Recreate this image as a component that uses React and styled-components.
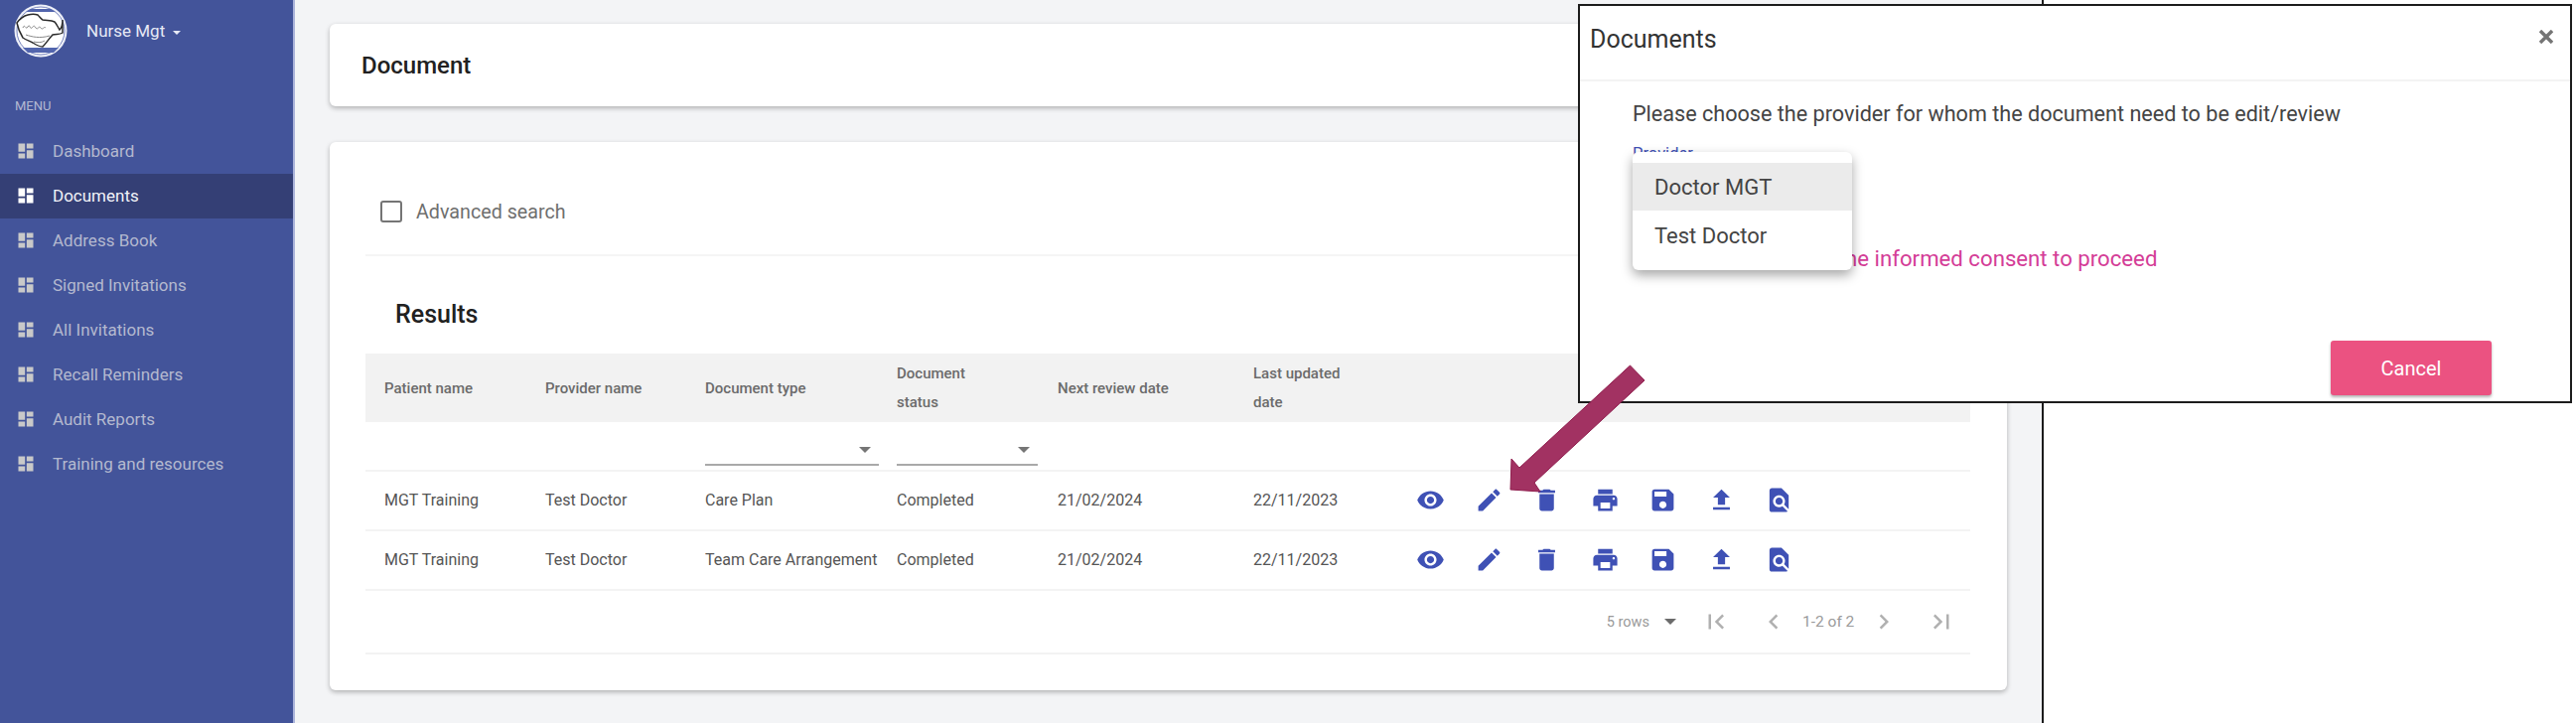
import styled, { createGlobalStyle } from "styled-components"

const GlobalStyle = createGlobalStyle`
   html, body {
      margin: 0;
      padding: 0;
      background: #fff;
      font-family: Roboto, "Liberation Sans", sans-serif;
   }
   * {
      box-sizing: border-box;
   }
`

const Page = styled.div`
   position: relative;
   display: flex;
   width: 2594px;
   height: 728px;
   overflow: hidden;
`

const Sidebar = styled.aside`
   width: 297px;
   flex-shrink: 0;
   background: #43549a;
   border-right: 2px solid #aab3da;
`

const Brand = styled.div`
   display: flex;
   align-items: center;
   height: 54px;
   margin: 4px 0 0 14px;
   column-gap: 19px;
   color: #e6e9f5;
   font-size: 17px;
`

const Caret = styled.span`
   display: inline-block;
   margin-left: ${(p) => p.$gap ?? 8}px;
   vertical-align: middle;
   border-left: ${(p) => p.$size || 4}px solid transparent;
   border-right: ${(p) => p.$size || 4}px solid transparent;
   border-top: ${(p) => p.$size || 4}px solid ${(p) => p.$color || "#e6e9f5"};
`

const MenuLabel = styled.div`
   margin: 41px 0 15px 15px;
   line-height: 16px;
   font-size: 13px;
   color: #b3b9d2;
`

const NavItem = styled.div`
   display: flex;
   align-items: center;
   height: 45px;
   padding: 0 0 2px 16px;
   column-gap: 17px;
   font-size: 17px;
   background: ${(p) => (p.$active ? "#343f75" : "transparent")};
   color: ${(p) => (p.$active ? "#f2f3f8" : "#b4b9cf")};

   svg {
      fill: ${(p) => (p.$active ? "#ffffff" : "#c9c9c9")};
   }
`

const Main = styled.main`
   width: 1761px;
   flex-shrink: 0;
   display: flex;
   flex-direction: column;
   row-gap: 36px;
   padding: 24px 35px 0 35px;
   background: #f3f4f6;
   border-right: 2px solid #1c1c1c;
`

const Card = styled.section`
   background: #fff;
   border-radius: 6px;
   box-shadow: 0 2px 5px rgba(0, 0, 0, 0.28);
`

const TitleCard = styled(Card)`
   display: flex;
   align-items: center;
   height: 83px;
   padding-left: 32px;
   font-size: 24px;
   font-weight: 500;
   color: #212121;
`

const ResultsCard = styled(Card)`
   height: 552px;
   padding: 0 37px 0 36px;
`

const SearchRow = styled.div`
   display: flex;
   align-items: center;
   height: 115px;
   padding: 27px 0 0 15px;
   column-gap: 14px;
   border-bottom: 2px solid #f5f5f5;
   color: #6f6f6f;
   font-size: 19.7px;
`

const CheckBox = styled.span`
   width: 22px;
   height: 22px;
   border: 2px solid #757575;
   border-radius: 3px;
`

const ResultsTitle = styled.h2`
   display: flex;
   align-items: center;
   height: 98px;
   margin: 0;
   padding: 18px 0 0 30px;
   font-size: 25px;
   font-weight: 500;
   color: #212121;
`

const Row = styled.div`
   display: grid;
   grid-template-columns: 162px 161px 193px 162px 197px 164px 1fr;
   align-items: center;
   height: ${(p) => p.$height}px;
   padding: 0 0 ${(p) => p.$lift || 0}px 19px;
   color: #555;
   font-size: 16px;
   border-bottom: 2px solid #f3f3f3;
`

const HeadRow = styled(Row)`
   padding-top: 1px;
   background: #f2f2f2;
   border-bottom: 0;
   color: #6b6b6b;
   font-size: 15px;
   font-weight: 500;
   line-height: 29px;
`

const FilterSelect = styled.div`
   display: flex;
   align-items: center;
   justify-content: flex-end;
   width: ${(p) => p.$width}px;
   height: 30px;
   margin-top: 10px;
   padding-right: 8px;
   border-bottom: 2px solid #a9a9a9;
`

const Actions = styled.div`
   display: flex;
   column-gap: 29.5px;

   svg {
      display: block;
      fill: #3f51b5;
   }
`

const Pagination = styled.div`
   display: flex;
   align-items: center;
   justify-content: flex-end;
   height: 64px;
   border-bottom: 2px solid #f3f3f3;
   color: #9a9a9a;
   font-size: 15.5px;
`

const PageButton = styled.span`
   display: flex;
   justify-content: center;
   width: 58px;

   svg {
      fill: #b0b0b0;
   }
`

const PageRange = styled.span`
   width: 53px;
   white-space: nowrap;
`

const RowsPick = styled.span`
   display: flex;
   align-items: center;
   margin-right: 11px;
   font-size: 14.5px;
`

const Modal = styled.div`
   position: absolute;
   left: 1589px;
   top: 4px;
   display: flex;
   flex-direction: column;
   width: 1001px;
   height: 402px;
   background: #fff;
   border: 2px solid #1c1c1c;
`

const ModalHeader = styled.header`
   display: flex;
   align-items: center;
   justify-content: space-between;
   height: 76px;
   padding: 0 17px 8px 10px;
   border-bottom: 2px solid #f3f3f3;
   font-size: 25px;
   color: #333;
`

const CloseIcon = styled.svg`
   margin-bottom: 4px;
   stroke: #757575;
   stroke-width: 3.4;
`

const ModalBody = styled.div`
   position: relative;
   flex: 1;
   padding: 19px 0 0 53px;
`

const Prompt = styled.p`
   margin: 0;
   line-height: 28px;
   font-size: 21.6px;
   color: #444;
`

const ProviderLabel = styled.div`
   margin-top: 18px;
   line-height: 16px;
   font-size: 16.5px;
   color: #3f51b5;
`

const Warning = styled.p`
   margin: 83px 0 0 17px;
   line-height: 28px;
   font-size: 22.2px;
   color: #d43d97;
`

const ModalFooter = styled.footer`
   display: flex;
   justify-content: flex-end;
   padding: 0 79px 6px 0;
`

const CancelButton = styled.button`
   width: 162px;
   height: 55px;
   border: 0;
   border-radius: 3px;
   background: #eb5281;
   color: #fff;
   font: 400 20px Roboto, sans-serif;
   box-shadow: 0 2px 3px rgba(0, 0, 0, 0.3);
`

const ProviderMenu = styled.ul`
   position: absolute;
   left: 53px;
   top: 71px;
   width: 221px;
   height: 119px;
   margin: 0;
   padding: 11px 0;
   list-style: none;
   background: #fff;
   border-radius: 6px;
   box-shadow: 0 5px 12px rgba(0, 0, 0, 0.35);
`

const ProviderOption = styled.li`
   display: flex;
   align-items: center;
   height: ${(p) => (p.$selected ? 48 : 50)}px;
   padding-left: 22px;
   font-size: 22px;
   color: #444;
   background: ${(p) => (p.$selected ? "#ebebeb" : "transparent")};
`

const ArrowOverlay = styled.svg`
   position: absolute;
   left: 1500px;
   top: 350px;
`

const Icon = ({ d, size = 29 }) => (
   <svg width={size} height={size} viewBox="0 0 24 24">
      <path d={d} />
   </svg>
)

const icons = {
   dashboard: "M3 13h8V3H3v10zm0 8h8v-6H3v6zm10 0h8V11h-8v10zm0-18v6h8V3h-8z",
   view: "M12 4.5C7 4.5 2.73 7.61 1 12c1.73 4.39 6 7.5 11 7.5s9.27-3.11 11-7.5c-1.73-4.39-6-7.5-11-7.5zM12 17c-2.76 0-5-2.24-5-5s2.24-5 5-5 5 2.24 5 5-2.24 5-5 5zm0-8c-1.66 0-3 1.34-3 3s1.34 3 3 3 3-1.34 3-3-1.34-3-3-3z",
   edit: "M3 17.25V21h3.75L17.81 9.94l-3.75-3.75L3 17.25zM20.71 7.04c.39-.39.39-1.02 0-1.41l-2.34-2.34c-.39-.39-1.02-.39-1.41 0l-1.83 1.83 3.75 3.75 1.83-1.83z",
   remove: "M6 19c0 1.1.9 2 2 2h8c1.1 0 2-.9 2-2V7H6v12zM19 4h-3.5l-1-1h-5l-1 1H5v2h14V4z",
   print: "M19 8H5c-1.66 0-3 1.34-3 3v6h4v4h12v-4h4v-6c0-1.66-1.34-3-3-3zm-3 11H8v-5h8v5zm3-7c-.55 0-1-.45-1-1s.45-1 1-1 1 .45 1 1-.45 1-1 1zm-1-9H6v4h12V3z",
   save: "M17 3H5c-1.11 0-2 .9-2 2v14c0 1.1.89 2 2 2h14c1.1 0 2-.9 2-2V7l-4-4zm-5 16c-1.66 0-3-1.34-3-3s1.34-3 3-3 3 1.34 3 3-1.34 3-3 3zm3-10H5V5h10v4z",
   upload: "M9 16h6v-6h4l-7-7-7 7h4zm-4 2h14v2H5z",
   find: "M20 19.59V8l-6-6H6c-1.1 0-1.99.9-1.99 2L4 20c0 1.1.89 2 1.99 2H18c.45 0 .85-.15 1.19-.4l-4.43-4.43c-.8.52-1.74.83-2.76.83-2.76 0-5-2.24-5-5s2.24-5 5-5 5 2.24 5 5c0 1.02-.31 1.96-.83 2.75L20 19.59zM9 13c0 1.66 1.34 3 3 3s3-1.34 3-3-1.34-3-3-3-3 1.34-3 3z",
   first: "M18.41 16.59L13.82 12l4.59-4.59L17 6l-6 6 6 6zM6 6h2v12H6z",
   prev: "M15.41 7.41L14 6l-6 6 6 6 1.41-1.41L10.83 12z",
   next: "M10 6L8.59 7.41 13.17 12l-4.58 4.59L10 18l6-6z",
   last: "M5.59 7.41L10.18 12l-4.59 4.59L7 18l6-6-6-6zM16 6h2v12h-2z",
}

const navItems = [
   "Dashboard",
   "Documents",
   "Address Book",
   "Signed Invitations",
   "All Invitations",
   "Recall Reminders",
   "Audit Reports",
   "Training and resources",
]

const documents = [
   { type: "Care Plan" },
   { type: "Team Care Arrangement" },
]

const actionIcons = ["view", "edit", "remove", "print", "save", "upload", "find"]

function Logo() {
   return (
      <svg width="54" height="54" viewBox="0 0 54 54">
         <circle cx="27" cy="27" r="26.5" fill="#eef0f8" />
         <circle cx="27" cy="27" r="24" fill="#fff" stroke="#5a6bb0" strokeWidth="0.8" />
         <path d="M17 5h20l5 3H12zM9 44h36l-5 5H14z" fill="#5265ad" />
         <path
            d="M3 19c3-4 7-7 11-8 4-1 7-1 10 0 2 2 3 4 5 5 4 1 8 0 12 2 2 2 3 5 5 8 2-2 3-6 3-10v13c-3 2-6 1-10 2-3 3-6 8-10 12-4 0-7-2-10-4-4-2-7-3-10-5-3-5-5-10-6-15z"
            fill="#fff"
            stroke="#2b2b2b"
            strokeWidth="1.5"
         />
         <path
            d="M9 24c2-5 3 3 5-1s2 3 4 1 2-3 4 0 3-3 5 0 3-2 5 0M12 31c6 2 14 4 24 1M20 38c4 1 8 1 11-1"
            fill="none"
            stroke="#8a8a8a"
            strokeWidth="1"
         />
      </svg>
   )
}

export default function App() {
   return (
      <Page>
         <GlobalStyle />

         <Sidebar>
            <Brand>
               <Logo />
               <span>
                  Nurse Mgt
                  <Caret />
               </span>
            </Brand>

            <MenuLabel>MENU</MenuLabel>

            {navItems.map((item) => (
               <NavItem key={item} $active={item === "Documents"}>
                  <Icon d={icons.dashboard} size={20} />
                  {item}
               </NavItem>
            ))}
         </Sidebar>

         <Main>
            <TitleCard>Document</TitleCard>

            <ResultsCard>
               <SearchRow>
                  <CheckBox />
                  Advanced search
               </SearchRow>

               <ResultsTitle>Results</ResultsTitle>

               <HeadRow $height={69}>
                  <span>Patient name</span>
                  <span>Provider name</span>
                  <span>Document type</span>
                  <span>
                     Document
                     <br />
                     status
                  </span>
                  <span>Next review date</span>
                  <span>
                     Last updated
                     <br />
                     date
                  </span>
               </HeadRow>

               <Row $height={50}>
                  <span />
                  <span />
                  <FilterSelect $width={175}>
                     <Caret $color="#757575" $size={6} $gap={0} />
                  </FilterSelect>
                  <FilterSelect $width={142}>
                     <Caret $color="#757575" $size={6} $gap={0} />
                  </FilterSelect>
               </Row>

               {documents.map((doc) => (
                  <Row key={doc.type} $height={60} $lift={2}>
                     <span>MGT Training</span>
                     <span>Test Doctor</span>
                     <span>{doc.type}</span>
                     <span>Completed</span>
                     <span>21/02/2024</span>
                     <span>22/11/2023</span>
                     <Actions>
                        {actionIcons.map((name) => (
                           <Icon key={name} d={icons[name]} />
                        ))}
                     </Actions>
                  </Row>
               ))}

               <Pagination>
                  <RowsPick>
                     5 rows
                     <Caret $color="#6b6b6b" $size={6} $gap={15} />
                  </RowsPick>
                  <PageButton>
                     <Icon d={icons.first} size={30} />
                  </PageButton>
                  <PageButton>
                     <Icon d={icons.prev} size={30} />
                  </PageButton>
                  <PageRange>1-2 of 2</PageRange>
                  <PageButton>
                     <Icon d={icons.next} size={30} />
                  </PageButton>
                  <PageButton>
                     <Icon d={icons.last} size={30} />
                  </PageButton>
               </Pagination>
            </ResultsCard>
         </Main>

         <Modal>
            <ModalHeader>
               Documents
               <CloseIcon width="14" height="14" viewBox="0 0 14 14">
                  <path d="M1 1L13 13M13 1L1 13" />
               </CloseIcon>
            </ModalHeader>

            <ModalBody>
               <Prompt>Please choose the provider for whom the document need to be edit/review</Prompt>
               <ProviderLabel>Provider</ProviderLabel>
               <Warning>Please read &amp; note the informed consent to proceed</Warning>

               <ProviderMenu>
                  <ProviderOption $selected>Doctor MGT</ProviderOption>
                  <ProviderOption>Test Doctor</ProviderOption>
               </ProviderMenu>
            </ModalBody>

            <ModalFooter>
               <CancelButton>Cancel</CancelButton>
            </ModalFooter>
         </Modal>

         <ArrowOverlay width="170" height="160" viewBox="1500 350 170 160">
            <path
               d="M1641.5 368L1656 383L1545 486L1551 495L1521 493L1522 462L1530 471Z"
               fill="#a23262"
               stroke="#8f1d4d"
               strokeWidth="1"
            />
         </ArrowOverlay>
      </Page>
   )
}
